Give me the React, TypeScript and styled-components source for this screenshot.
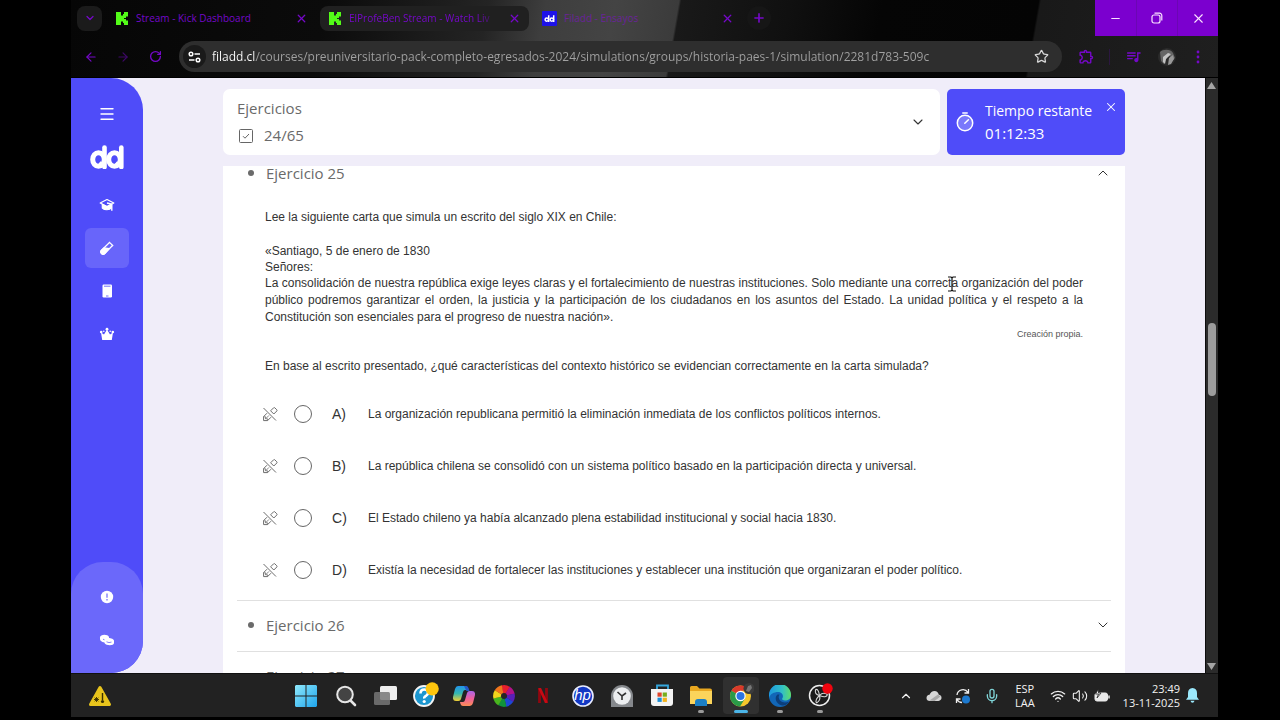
import React from "react";
import styled, { createGlobalStyle, css } from "styled-components";
import {
  ArrowLeft,
  ArrowRight,
  ChevronDown,
  ChevronUp,
  Menu,
  Mic,
  Minus,
  Plus,
  RotateCw,
  Star,
  Volume2,
  Wifi,
  X,
} from "lucide-react";
import { MdQueueMusic, MdOutlineExtension } from "react-icons/md";

const GlobalStyle = createGlobalStyle`
  *, *::before, *::after { box-sizing: border-box; }
  body { margin: 0; background: #000; font-family: "Open Sans", "Noto Sans", sans-serif; }
  button { margin: 0; padding: 0; border: 0; background: none; color: inherit; font: inherit; cursor: pointer; }
  h2, h3, p, ul, fieldset { margin: 0; padding: 0; border: 0; font-weight: 400; list-style: none; }
  svg { display: block; flex: none; }
`;

const indigo = "#4f4cf9";
const violet = "#7508c8";

/* ---------- desktop and browser frame ---------- */

const Desktop = styled.div`
  display: flex;
  flex-direction: column;
  height: 100vh;
  padding: 0 62px 3px 71px;
  background: #000;
  overflow: hidden;
`;

const Chrome = styled.header`
  display: flex;
  flex-direction: column;
  height: 78px;
  flex: none;
  border-bottom: 1px solid #000;
  background: linear-gradient(
    100deg,
    #060606 0%,
    #0b0b0b 22%,
    #242424 36%,
    #3e3e3e 41%,
    #444 47%,
    #3b3b3b 52.4%,
    #191919 52.6%,
    #101010 62%,
    #050505 70%,
    #040404 83.4%,
    #191919 83.6%,
    #1f1f1f 100%
  );
`;

const TabStrip = styled.div`
  display: flex;
  align-items: center;
  height: 36px;
  padding-left: 6px;
  color: ${violet};
`;

const TabSearch = styled.button`
  display: grid;
  place-items: center;
  width: 25px;
  height: 25px;
  margin-right: 5px;
  border-radius: 8px;
  background: #1b1b1b;
`;

const Tab = styled.div<{ $filled?: boolean; $dim?: boolean }>`
  display: flex;
  align-items: center;
  flex: 0 1 209px;
  min-width: 0;
  height: 25px;
  margin-right: 4px;
  padding: 0 8px 0 9px;
  gap: 7px;
  border-radius: 8px;
  background: ${(p) => (p.$filled ? "#202020" : "transparent")};
  color: ${(p) => (p.$dim ? "#6a2399" : violet)};
`;

const TabTitle = styled.span<{ $fade?: boolean }>`
  flex: 1;
  min-width: 0;
  overflow: hidden;
  white-space: nowrap;
  font-size: 10px;
  line-height: 16px;
  ${(p) => p.$fade && css`mask-image: linear-gradient(90deg, #000 85%, transparent);`}
`;

const IconButton = styled.button`
  display: grid;
  place-items: center;
  flex: none;
  color: ${violet};
`;

const TabClose = styled(IconButton)`
  width: 14px;
  height: 14px;
`;

const NewTab = styled(IconButton)`
  width: 24px;
  height: 24px;
  margin-left: 1px;
  border-radius: 12px;
  background: #161616;
`;

const WindowControls = styled.div`
  display: flex;
  align-self: stretch;
  margin-left: auto;
  background: #7b00cf;
`;

const WindowControl = styled.button`
  display: grid;
  place-items: center;
  width: 41px;
  color: #fbe3ff;
  & + & { border-left: 1px solid #6c06b4; }
`;

const Toolbar = styled.div`
  display: flex;
  align-items: center;
  flex: 1;
  padding: 0 18px 0 12px;
`;

const NavGroup = styled.div`
  display: flex;
  gap: 16px;
  margin-right: 16px;
`;

const NavButton = styled(IconButton)<{ $muted?: boolean }>`
  width: 16px;
  height: 16px;
  opacity: ${(p) => (p.$muted ? 0.5 : 1)};
`;

const AddressBar = styled.div`
  display: flex;
  align-items: center;
  flex: 1;
  height: 31px;
  padding: 0 13px 0 4px;
  gap: 6px;
  border-radius: 16px;
  background: #2e2e2e;
  color: #d8d8d8;
`;

const SiteInfo = styled.button`
  display: grid;
  place-items: center;
  width: 23px;
  height: 23px;
  border-radius: 12px;
  background: #1a1a1a;
  color: #fff;
`;

const AddressInput = styled.input`
  flex: 1;
  min-width: 0;
  height: 24px;
  padding: 0;
  border: 0;
  outline: 0;
  font-family: "Open Sans", "Noto Sans", sans-serif;
  font-size: 12px;
  color: transparent;
  background: linear-gradient(90deg, #fff 44px, #a2a2a2 44px);
  background-clip: text;
  -webkit-background-clip: text;
`;

const ExtensionTools = styled.div`
  display: flex;
  align-items: center;
  margin-left: 16px;
  color: #6a10c4;
`;

const ToolDivider = styled.span`
  width: 1px;
  height: 16px;
  margin: 0 15px 0 14px;
  background: #2b1740;
`;

const Avatar = styled.button`
  width: 18px;
  height: 18px;
  margin: 0 20px 0 16px;
  border-radius: 9px;
  overflow: hidden;
`;

/* ---------- page ---------- */

const Viewport = styled.div`
  position: relative;
  display: flex;
  flex: 1;
  min-height: 0;
  background: #f0edf9;
`;

const Sidebar = styled.nav`
  display: flex;
  flex-direction: column;
  align-items: center;
  width: 72px;
  flex: none;
  padding-top: 16px;
  border-radius: 0 32px 32px 0;
  background: ${indigo};
  color: #fff;
  overflow: hidden;
`;

const SideLink = styled.a<{ $active?: boolean }>`
  display: grid;
  place-items: center;
  width: 44px;
  height: 40px;
  margin-bottom: 3px;
  border-radius: 6px;
  color: #fff;
  background: ${(p) => (p.$active ? "#6865fa" : "transparent")};
`;

const SideMenu = styled.button`
  display: grid;
  place-items: center;
  width: 44px;
  height: 40px;
`;

const Brand = styled.a`
  margin: 11px 0 16px;
`;

const SideFooter = styled.div`
  display: flex;
  flex-direction: column;
  align-items: center;
  width: 100%;
  height: 111px;
  margin-top: auto;
  padding-top: 15px;
  border-radius: 32px 32px 0 0;
  background: #6b68fa;
`;

const Main = styled.main`
  display: flex;
  flex-direction: column;
  flex: 1;
  min-width: 0;
  padding: 11px 80px 0;
`;

const TopRow = styled.div`
  display: flex;
  gap: 7px;
  height: 66px;
  margin-bottom: 11px;
  flex: none;
`;

const SummaryCard = styled.section`
  display: flex;
  align-items: center;
  justify-content: space-between;
  flex: 1;
  padding: 0 14px;
  border-radius: 7px;
  background: #fff;
  color: #6a6a6a;
`;

const SummaryTitle = styled.h2`
  font-size: 15px;
  line-height: 27px;
`;

const Progress = styled.p`
  display: flex;
  align-items: center;
  gap: 11px;
  padding-left: 2px;
  font-size: 15px;
  line-height: 27px;
`;

const DarkButton = styled.button`
  display: grid;
  place-items: center;
  width: 16px;
  height: 16px;
  color: #333;
`;

const TimerCard = styled.aside`
  display: flex;
  align-items: center;
  width: 178px;
  padding-left: 9px;
  gap: 11px;
  border-radius: 5px;
  background: ${indigo};
  color: #fff;
`;

const TimerTitle = styled.h2`
  font-size: 14px;
  line-height: 23px;
  white-space: nowrap;
`;

const TimerValue = styled.p`
  font-size: 15px;
  line-height: 23px;
`;

const TimerClose = styled.button`
  align-self: flex-start;
  margin: 11px 7px 0 auto;
`;

const ListPanel = styled.section`
  flex: 1;
  min-height: 0;
  padding: 0 14px;
  background: #fff;
  overflow: hidden;
`;

/* The list is scrolled a little past the top of its first heading. */
const ScrolledList = styled.ul`
  margin-top: -17px;
`;

const Exercise = styled.li`
  border-bottom: 1px solid #e0e0e0;
`;

const ExerciseHeader = styled.h3`
  display: flex;
  align-items: center;
  height: 50px;
  padding: 0 0 2px 11px;
  font-size: 15px;
  line-height: 16px;
  color: #6a6a6a;
  button { margin-left: auto; }
`;

const Bullet = styled.span`
  width: 6px;
  height: 6px;
  margin-right: 12px;
  border-radius: 3px;
  background: #6a6a6a;
`;

const Statement = styled.div`
  padding: 10px 28px 14px;
  font-family: "Liberation Sans", Arial, sans-serif;
  font-size: 12px;
  line-height: 16px;
  color: #333;
`;

const Letter = styled.div`
  padding: 18px 0 16px;
`;

const LetterBody = styled.p`
  line-height: 17px;
  text-align: justify;
`;

const Source = styled.p`
  font-size: 9px;
  text-align: right;
  color: #555;
`;

const Options = styled.fieldset`
  padding: 0 0 4px 25px;
`;

const Option = styled.div`
  display: grid;
  grid-template-columns: 16px 18px 1fr;
  column-gap: 16px;
  align-items: center;
  height: 52px;
  color: #6c6c6c;
`;

const Radio = styled.input`
  appearance: none;
  width: 18px;
  height: 18px;
  margin: 0;
  border: 1px solid #666;
  border-radius: 9px;
  background: #fff;
`;

const OptionLabel = styled.label`
  display: grid;
  grid-template-columns: 32px 1fr;
  column-gap: 4px;
  align-items: center;
  padding-left: 4px;
  font-family: "Liberation Sans", Arial, sans-serif;
  font-size: 12px;
  line-height: 16px;
  color: #333;
`;

const OptionKey = styled.span`
  font-size: 14px;
`;

const ScrollTrack = styled.div`
  display: flex;
  flex-direction: column;
  align-items: center;
  width: 13px;
  flex: none;
  padding: 4px 1px 3px 0;
  border-left: 1px solid #0d0d0d;
  background: #2b2b2b;
`;

const ScrollThumb = styled.span`
  width: 8px;
  height: 73px;
  margin: 234px 0 auto;
  border-radius: 4px;
  background: #9c9c9c;
`;

const TextCursor = styled.svg`
  position: absolute;
  left: 876px;
  top: 198px;
`;

/* ---------- taskbar ---------- */

const Taskbar = styled.footer`
  display: flex;
  align-items: center;
  height: 44px;
  flex: none;
  border-top: 1px solid #111;
  background: #222;
  color: #f2f2f2;
`;

const Widgets = styled.button`
  width: 24px;
  margin: 0 176px 0 17px;
`;

const AppRow = styled.div`
  display: flex;
  justify-content: space-between;
  width: 550px;
  flex: none;
`;

const AppButton = styled.button<{ $open?: boolean; $active?: boolean }>`
  position: relative;
  display: grid;
  place-items: center;
  width: 36px;
  height: 37px;
  border-radius: 4px;
  background: ${(p) => (p.$active ? "#303030" : "transparent")};
  &::after {
    content: "";
    position: absolute;
    bottom: 1px;
    left: 50%;
    translate: -50% 0;
    width: ${(p) => (p.$active ? 14 : 6)}px;
    height: 3px;
    border-radius: 2px;
    background: ${(p) => (p.$active ? "#4cb5e8" : p.$open ? "#9a9a9a" : "transparent")};
  }
`;

const Tray = styled.div`
  display: flex;
  align-items: center;
  margin-left: auto;
  padding-right: 19px;
  gap: 13px;
`;

const TrayCluster = styled.div`
  display: flex;
  align-items: center;
  gap: 6px;
`;

const TrayText = styled.p<{ $align: "center" | "right" }>`
  font-size: 11px;
  line-height: 14px;
  text-align: ${(p) => p.$align};
  padding: ${(p) => (p.$align === "center" ? "0 2px" : "0")};
  white-space: nowrap;
`;

const TrayClock = styled.div`
  display: flex;
  align-items: center;
  gap: 6px;
`;

/* ---------- drawings ---------- */

const KickLogo = () => (
  <svg width="13" height="13" viewBox="0 0 13 13" fill="#53fc18">
    <rect x="0" y="0" width="5" height="13" />
    <rect x="4" y="3.500" width="4" height="6" />
    <rect x="7" y="2" width="3" height="4" />
    <rect x="8" y="0" width="4" height="4.500" />
    <rect x="7" y="7" width="3" height="4" />
    <rect x="8" y="8.500" width="4" height="4.500" />
  </svg>
);

const DdMark = ({ width, height }: { width: number; height: number }) => (
  <svg width={width} height={height} viewBox="0 0 34 24" fill="none" stroke="#fff" strokeWidth="5">
    <ellipse cx="8.500" cy="14.500" rx="5.800" ry="6.800" />
    <path d="M14.500 2.500v19.500" strokeWidth="4.600" strokeLinecap="round" />
    <ellipse cx="24.500" cy="14.500" rx="5.800" ry="6.800" />
    <path d="M31.300 2.500v19.500" strokeWidth="4.600" strokeLinecap="round" />
    <path d="M9.500 17.500l3 2.500M26 17.500l3 2.500" strokeWidth="3.400" />
  </svg>
);

const FiladdFavicon = () => (
  <svg width="15" height="15" viewBox="0 0 15 15">
    <rect width="15" height="15" rx="1" fill="#1d12e8" />
    <g fill="none" stroke="#fff" strokeWidth="1.500">
      <circle cx="4.800" cy="8.600" r="1.700" />
      <circle cx="9.800" cy="8.600" r="1.700" />
      <path d="M6.700 4.200V11M11.700 4.200V11" />
    </g>
  </svg>
);

const RestoreIcon = () => (
  <svg width="12" height="12" viewBox="0 0 12 12" fill="none" stroke="currentColor" strokeWidth="1.200">
    <rect x="1" y="3" width="8" height="8" rx="2" />
    <path d="M3.500 1.200H8.500a2.300 2.300 0 0 1 2.300 2.300V8.500" />
  </svg>
);

const TuneIcon = () => (
  <svg width="13" height="12" viewBox="0 0 13 12" fill="none" stroke="currentColor" strokeWidth="1.500">
    <circle cx="3" cy="3" r="1.800" />
    <path d="M6.500 3H12M1 9h5.500" />
    <circle cx="10" cy="9" r="1.800" />
  </svg>
);

const DotsIcon = () => (
  <svg width="4" height="14" viewBox="0 0 4 14" fill="currentColor">
    <circle cx="2" cy="2" r="1.400" />
    <circle cx="2" cy="7" r="1.400" />
    <circle cx="2" cy="12" r="1.400" />
  </svg>
);

const AvatarPicture = () => (
  <svg width="18" height="18" viewBox="0 0 18 18">
    <rect width="18" height="18" fill="#2b2b2b" />
    <path d="M2 4c3-3 11-3 13 1l2 5-3 3-2-5-3 1-3 7-3-3z" fill="#666" />
    <path d="M5 9l5-4 3 1-5 5-1 5-2-2z" fill="#c4c4c4" />
    <path d="M11 10l4-3 1 4-3 5-3 1z" fill="#999" />
  </svg>
);

const CapIcon = () => (
  <svg width="16" height="16" viewBox="0 0 16 16" fill="none" stroke="#fff" strokeWidth="1.200" strokeLinejoin="round">
    <path d="M1.200 6L8 2.500 14.800 6 8 9.500z" />
    <path d="M3.300 7.400L8 9.800l4.200-2.200v3.600C10.500 13.200 5.500 13.400 3.300 11z" fill="#fff" />
    <path d="M8 6l4.800 1.300v6.500" strokeWidth="1.400" />
  </svg>
);

const TubeIcon = () => (
  <svg width="16" height="16" viewBox="0 0 16 16" fill="none" stroke="#fff" strokeWidth="1.200" strokeLinejoin="round">
    <path d="M10 1.800l4.200 4.200M10.500 2.500L2.500 10.200a2.300 2.300 0 0 0 3.300 3.300L13.500 5.500" />
    <path d="M5.200 7.800l4.800.8L5.800 13.500a2.300 2.300 0 0 1-3.300-3.300z" fill="#fff" />
  </svg>
);

const TabletIcon = () => (
  <svg width="16" height="16" viewBox="0 0 16 16">
    <rect x="3.500" y="1.500" width="9.500" height="13" rx="1.200" fill="#fff" />
    <path d="M5 3.200h6.500M7 13h2.500" stroke={indigo} strokeWidth=".8" />
  </svg>
);

const CrownIcon = () => (
  <svg width="16" height="16" viewBox="0 0 16 16" fill="#fff">
    <path d="M2 6.500l3 2 3-5 3 5 3-2-1.200 7.500H3.200z" />
    <circle cx="8" cy="3.200" r="1.400" />
    <circle cx="2.200" cy="6" r="1.300" />
    <circle cx="13.800" cy="6" r="1.300" />
    <circle cx="4.800" cy="5.200" r=".8" />
    <circle cx="11.200" cy="5.200" r=".8" />
  </svg>
);

const AlertIcon = () => (
  <svg width="16" height="16" viewBox="0 0 16 16">
    <circle cx="8" cy="8" r="6.200" fill="#fff" />
    <path d="M8 4.500v4.200M8 10v1.400" stroke="#6b68fa" strokeWidth="1.200" />
  </svg>
);

const CoinsIcon = () => (
  <svg width="16" height="16" viewBox="0 0 16 16">
    <path d="M1 5.500C1 2 9 2 10 5v4C8 11.500 1 10.500 1 7z" fill="#fff" />
    <path d="M5 8.500C5 5 15 5.500 15 9v2c0 3-8 3-9.500 0z" fill="#fff" />
    <path d="M4 7.200l1.500.6M7.500 9.800l2.500.8 2.500-.5" stroke="#6b68fa" strokeWidth=".8" fill="none" />
  </svg>
);

const CheckBoxIcon = () => (
  <svg width="14" height="14" viewBox="0 0 14 14" fill="none" stroke="#666">
    <rect x=".5" y=".5" width="13" height="13" rx="1" />
    <path d="M4 7.200l2 2 4-4.200" />
  </svg>
);

const StopwatchIcon = () => (
  <svg width="18" height="20" viewBox="0 0 18 20" fill="none" stroke="#fff" strokeWidth="1.500" strokeLinecap="round">
    <circle cx="9" cy="11" r="7.700" fill="#7a78fb" />
    <path d="M6.800 1h4.400M8.800 11.300l3.600-3.600" />
  </svg>
);

const CrossedPencil = () => (
  <svg width="16" height="16" viewBox="0 0 16 16" fill="none" stroke="currentColor" strokeWidth="1" strokeLinejoin="round">
    <path d="M1.500 2l12.500 12.500" />
    <path d="M8.600 4.800l3-3q.6-.5 1.200 0l2 2q.5.600 0 1.200l-3 3z" />
    <path d="M5 7.200L1.600 10.600v4h4L9 11.200" />
    <path d="M1.600 10.800h2v2h2v1.800M3.600 12.800l3.400-3.400" strokeWidth=".8" />
  </svg>
);

const WarningWidget = () => (
  <svg width="24" height="22" viewBox="0 0 24 22">
    <path d="M12 2.500L21.500 19.500h-19z" fill="#e8c41c" stroke="#e8c41c" strokeWidth="3" strokeLinejoin="round" />
    <path d="M14.500 8v7" stroke="#3a3000" strokeWidth="1.400" />
    <circle cx="14.500" cy="16.500" r="1.600" fill="#3a3000" />
    <path d="M6 14.500h5M8.500 12v5M6.700 12.700l3.600 3.600M10.300 12.700l-3.600 3.600" stroke="#3a3000" strokeWidth=".9" />
  </svg>
);

const StartIcon = () => (
  <svg width="22" height="22" viewBox="0 0 22 22">
    <defs>
      <linearGradient id="start" x1="0" y1="0" x2="1" y2="1">
        <stop offset="0" stopColor="#8fe9fb" />
        <stop offset="1" stopColor="#1ea4ec" />
      </linearGradient>
    </defs>
    <path d="M1 0H10.500V10.500H0V1zM11.500 0H21l1 1v9.500H11.500zM0 11.500H10.500V22H1l-1-1zM11.500 11.500H22V21l-1 1h-9.500z" fill="url(#start)" />
  </svg>
);

const SearchIcon = () => (
  <svg width="22" height="22" viewBox="0 0 22 22" fill="#444" stroke="#e6e6e6">
    <path d="M15 15l5 5" strokeWidth="2.600" strokeLinecap="round" />
    <circle cx="10" cy="9.500" r="7.800" strokeWidth="2" />
  </svg>
);

const TaskViewIcon = () => (
  <svg width="23" height="20" viewBox="0 0 23 20">
    <rect x="6" y="0" width="17" height="14" rx="1.500" fill="#eee" />
    <rect x="0" y="6" width="16" height="13" rx="1.500" fill="#777" fillOpacity=".85" />
  </svg>
);

const HelpAppIcon = () => (
  <svg width="28" height="28" viewBox="0 0 28 28">
    <circle cx="13" cy="14" r="10" fill="#1b96cf" stroke="#f4f4f4" strokeWidth="1.800" />
    <path d="M9.500 11.500q0-4 3.800-4t3.700 3.300q0 2-2 3t-1.700 2.700" fill="none" stroke="#fff" strokeWidth="2.600" />
    <circle cx="13.200" cy="19.500" r="1.600" fill="#fff" />
    <circle cx="21.200" cy="6.800" r="6.600" fill="#fdc50e" />
  </svg>
);

const CopilotIcon = () => (
  <svg width="22" height="20" viewBox="0 0 22 20">
    <defs>
      <linearGradient id="cpA" x1="0" y1="0" x2="0" y2="1">
        <stop offset="0" stopColor="#2294ea" />
        <stop offset=".5" stopColor="#35b8b0" />
        <stop offset="1" stopColor="#f2cf33" />
      </linearGradient>
      <linearGradient id="cpB" x1="0" y1="0" x2="0" y2="1">
        <stop offset="0" stopColor="#a965e8" />
        <stop offset=".5" stopColor="#ee5f9c" />
        <stop offset="1" stopColor="#fb8d54" />
      </linearGradient>
    </defs>
    <path d="M5 0h7q2 0 2.500 2l.5 2h-3q-1.500 0-2 2L8 13q-.6 2-2.500 2H3q-3.500 0-3-4L2 3q.8-3 3-3z" fill="url(#cpA)" />
    <path d="M17 20h-7q-2 0-2.500-2L7 16h3q1.500 0 2-2l2-7q.6-2 2.500-2H19q3.500 0 3 4l-2 8q-.8 3-3 3z" fill="url(#cpB)" />
    <path d="M11 0h2q2 0 2.500 2l1 3h-3z" fill="#2457c9" />
  </svg>
);

const ColorWheel = () => {
  const colors = ["#e8202c", "#b3128a", "#5a1fb8", "#1f46d6", "#10923c", "#49b51e", "#f1d51c", "#f1761c"];
  return (
    <svg width="22" height="22" viewBox="-11 -11 22 22">
      {colors.map((c, i) => (
        <path key={c} d="M0 0L-4.300-10A10.800 10.800 0 0 1 4.300-10z" fill={c} transform={`rotate(${i * 45 + 10})`} />
      ))}
      <circle r="3" fill="#252525" />
    </svg>
  );
};

const RibbonIcon = () => (
  <svg width="10" height="15" viewBox="0 0 10 15" fill="none" strokeWidth="2.800">
    <path d="M1.500 0v15M8.500 0v15" stroke="#8f0710" />
    <path d="M1.500 0l7 15" stroke="#c90a14" />
  </svg>
);

const HpIcon = () => (
  <svg width="22" height="22" viewBox="0 0 22 22">
    <circle cx="11" cy="11" r="10" fill="#1238c4" stroke="#e8ecff" strokeWidth="1.600" />
    <text x="10.500" y="15" textAnchor="middle" fontFamily="Liberation Sans, sans-serif" fontStyle="italic" fontSize="15" fill="#fff">
      hp
    </text>
  </svg>
);

const ClockIcon = () => (
  <svg width="22" height="22" viewBox="0 0 22 22">
    <path d="M0 11A11 11 0 0 1 22 11v11H0z" fill="#85888c" />
    <circle cx="11" cy="11" r="8.800" fill="#eceef0" />
    <path d="M6.500 7l4.500 4 4-3M11 11v4" stroke="#333" strokeWidth="1.600" fill="none" />
  </svg>
);

const StoreIcon = () => (
  <svg width="22" height="23" viewBox="0 0 22 23">
    <path d="M6 6V1.500h11V6" fill="none" stroke="#35a7dd" strokeWidth="1.800" />
    <path d="M0 5h22v14q0 3-3 3H3q-3 0-3-3z" fill="#f3f3f3" />
    <rect x="6.500" y="8.500" width="4.200" height="4.200" fill="#e0442a" />
    <rect x="11.700" y="8.500" width="4.200" height="4.200" fill="#77ae1c" />
    <rect x="6.500" y="13.700" width="4.200" height="4.200" fill="#1b8fd8" />
    <rect x="11.700" y="13.700" width="4.200" height="4.200" fill="#f4b31a" />
  </svg>
);

const FolderIcon = () => (
  <svg width="22" height="20" viewBox="0 0 22 20">
    <path d="M0 1.500Q0 0 1.500 0H7l2.500 2.500H20q2 0 2 2V17q0 1-1 1H0z" fill="#e9a820" />
    <path d="M0 5h22v13H0z" fill="#fbd45b" />
    <path d="M5 20v-4q0-3 3-3h6q3 0 3 3v4z" fill="#1b7fc4" />
  </svg>
);

const ChromeIcon = () => (
  <svg width="26" height="26" viewBox="0 0 26 26">
    <circle cx="12.500" cy="13" r="10.500" fill="#f6c72c" />
    <path d="M12.500 13L3.400 7.800A10.500 10.500 0 0 1 21.600 7.800H12.500z" fill="#d93a2b" />
    <path d="M12.500 13L3.400 7.800A10.500 10.500 0 0 0 12 23.500L17 15.500z" fill="#2a9a48" />
    <circle cx="12.500" cy="13" r="5.200" fill="#fff" />
    <circle cx="12.500" cy="13" r="4" fill="#2b74e2" />
    <circle cx="21" cy="5.500" r="5.500" fill="#3b3b3b" />
    <path d="M18 8l2-5 3-1 1 3-3 4z" fill="#777" />
  </svg>
);

const EdgeIcon = () => (
  <svg width="22" height="22" viewBox="0 0 22 22">
    <defs>
      <linearGradient id="edge" x1="0" y1=".3" x2="1" y2=".3">
        <stop offset="0" stopColor="#1d97df" />
        <stop offset=".6" stopColor="#31c0c6" />
        <stop offset="1" stopColor="#5fdc6b" />
      </linearGradient>
    </defs>
    <circle cx="11" cy="11" r="11" fill="#1267b8" />
    <path d="M0 10A11 11 0 0 1 22 10c0 4-3 5.500-6 5.500-2.500 0-3.500-1-2.500-2.500C15 10 12.500 7 9 7 5 7 1 9 0 13z" fill="url(#edge)" />
    <path d="M8.500 9.500C5 12 6.500 19 13 20.500c3.500.5 6-2 7-4-3 1.500-7 1.200-9-1-1.500-1.800-1.800-4-.5-6z" fill="#0c3f7c" />
  </svg>
);

const ObsIcon = () => (
  <svg width="26" height="26" viewBox="0 0 26 26">
    <circle cx="12.500" cy="12.500" r="10" fill="#1b1b1b" stroke="#eee" strokeWidth="1.500" />
    <path d="M12.500 12.500q-5-1-4-6M12.500 12.500q3.500-4 8-1M12.500 12.500q1.500 5-3 7.500M8.500 6.500q3-1 4 6M20.500 11.500q-1 4-8 1M9.500 20q-2-3 3-7.500" fill="none" stroke="#d5d5d5" strokeWidth="1.100" />
    <circle cx="20.500" cy="5.500" r="5.200" fill="#f0050f" />
  </svg>
);

const CloudIcon = () => (
  <svg width="16" height="12" viewBox="0 0 16 12">
    <path d="M4 11q-3.500 0-3.500-3t3-3.200Q5 1 8.500 1t4.300 3.800q2.700.4 2.700 3T12.500 11z" fill="#d6d6d6" />
    <path d="M3.500 10.500L12 4.500l2.500 2-6 4.500z" fill="#a7a7a7" />
  </svg>
);

const SyncIcon = () => (
  <svg width="16" height="16" viewBox="0 0 16 16" fill="none" stroke="#eee" strokeWidth="1.300">
    <path d="M2 7A6 6 0 0 1 13 4.500M13.500 1v4H9.500M1.500 15v-4h4M2 11.500q1.500 3 5 3" />
    <circle cx="11" cy="11.500" r="4" fill="#1c79cf" stroke="none" />
  </svg>
);

const BatteryIcon = () => (
  <svg width="16" height="13" viewBox="0 0 16 13">
    <rect x="1" y="4" width="12.500" height="8" rx="2" fill="#e9e9e9" stroke="#e9e9e9" />
    <path d="M15 6.500v3" stroke="#e9e9e9" strokeWidth="1.500" />
    <path d="M4.500 0L1.500 5h3L3 9l4-5H4.500z" fill="#f2f2f2" stroke="#222" strokeWidth=".8" />
  </svg>
);

const BellIcon = () => (
  <svg width="13" height="15" viewBox="0 0 13 15" fill="#9be8fb">
    <path d="M6.500 0Q11 .5 11 5v4l2 2.800H0L2 9V5Q2 .5 6.500 0zM4.500 12.800h4q-.4 2-2 2t-2-2z" />
  </svg>
);

const Triangle = ({ down }: { down?: boolean }) => (
  <svg width="9" height="7" viewBox="0 0 9 7" fill="#a5a5a5">
    <path d={down ? "M0 0h9L4.500 7z" : "M0 7h9L4.500 0z"} />
  </svg>
);

/* ---------- content ---------- */

const options = [
  { id: "A", text: "La organización republicana permitió la eliminación inmediata de los conflictos políticos internos." },
  { id: "B", text: "La república chilena se consolidó con un sistema político basado en la participación directa y universal." },
  { id: "C", text: "El Estado chileno ya había alcanzado plena estabilidad institucional y social hacia 1830." },
  { id: "D", text: "Existía la necesidad de fortalecer las instituciones y establecer una institución que organizaran el poder político." },
];

const apps = [
  { name: "Inicio", icon: <StartIcon /> },
  { name: "Buscar", icon: <SearchIcon /> },
  { name: "Vista de tareas", icon: <TaskViewIcon /> },
  { name: "Ayuda", icon: <HelpAppIcon /> },
  { name: "Copilot", icon: <CopilotIcon /> },
  { name: "Color", icon: <ColorWheel /> },
  { name: "Netflix", icon: <RibbonIcon /> },
  { name: "HP", icon: <HpIcon /> },
  { name: "Reloj", icon: <ClockIcon /> },
  { name: "Store", icon: <StoreIcon /> },
  { name: "Explorador", icon: <FolderIcon />, open: true },
  { name: "Chrome", icon: <ChromeIcon />, active: true },
  { name: "Edge", icon: <EdgeIcon />, open: true },
  { name: "OBS", icon: <ObsIcon />, open: true },
];

const BrowserChrome = () => (
  <Chrome>
    <TabStrip>
      <TabSearch aria-label="Buscar pestañas"><ChevronDown size={12} strokeWidth={2.5} /></TabSearch>
      <Tab>
        <KickLogo />
        <TabTitle>Stream - Kick Dashboard</TabTitle>
        <TabClose aria-label="Cerrar pestaña"><X size={13} strokeWidth={2.4} /></TabClose>
      </Tab>
      <Tab $filled>
        <KickLogo />
        <TabTitle $fade>ElProfeBen Stream - Watch Liv</TabTitle>
        <TabClose aria-label="Cerrar pestaña"><X size={13} strokeWidth={2.4} /></TabClose>
      </Tab>
      <Tab $dim>
        <FiladdFavicon />
        <TabTitle>Filadd - Ensayos</TabTitle>
        <TabClose aria-label="Cerrar pestaña"><X size={13} strokeWidth={2.4} /></TabClose>
      </Tab>
      <NewTab aria-label="Nueva pestaña"><Plus size={14} strokeWidth={2.8} /></NewTab>
      <WindowControls>
        <WindowControl aria-label="Minimizar"><Minus size={13} /></WindowControl>
        <WindowControl aria-label="Restaurar"><RestoreIcon /></WindowControl>
        <WindowControl aria-label="Cerrar"><X size={15} strokeWidth={1.8} /></WindowControl>
      </WindowControls>
    </TabStrip>
    <Toolbar>
      <NavGroup>
        <NavButton aria-label="Atrás"><ArrowLeft size={14} /></NavButton>
        <NavButton aria-label="Adelante" $muted><ArrowRight size={14} /></NavButton>
        <NavButton aria-label="Recargar"><RotateCw size={13} strokeWidth={2.4} /></NavButton>
      </NavGroup>
      <AddressBar>
        <SiteInfo aria-label="Información del sitio"><TuneIcon /></SiteInfo>
        <AddressInput
          aria-label="Dirección"
          defaultValue="filadd.cl/courses/preuniversitario-pack-completo-egresados-2024/simulations/groups/historia-paes-1/simulation/2281d783-509c"
        />
        <Star size={15} strokeWidth={2} />
      </AddressBar>
      <ExtensionTools>
        <IconButton aria-label="Extensiones"><MdOutlineExtension size={17} /></IconButton>
        <ToolDivider />
        <IconButton aria-label="Control multimedia"><MdQueueMusic size={17} /></IconButton>
        <Avatar aria-label="Perfil"><AvatarPicture /></Avatar>
        <IconButton aria-label="Menú"><DotsIcon /></IconButton>
      </ExtensionTools>
    </Toolbar>
  </Chrome>
);

const SideNav = () => (
  <Sidebar aria-label="Principal">
    <SideMenu aria-label="Abrir menú"><Menu size={18} strokeWidth={1.8} /></SideMenu>
    <Brand href="#inicio" aria-label="Filadd"><DdMark width={34} height={24} /></Brand>
    <SideLink href="#cursos" aria-label="Cursos"><CapIcon /></SideLink>
    <SideLink href="#ensayos" aria-label="Ensayos" $active><TubeIcon /></SideLink>
    <SideLink href="#material" aria-label="Material"><TabletIcon /></SideLink>
    <SideLink href="#premium" aria-label="Premium"><CrownIcon /></SideLink>
    <SideFooter>
      <SideLink href="#avisos" aria-label="Avisos"><AlertIcon /></SideLink>
      <SideLink href="#monedas" aria-label="Monedas"><CoinsIcon /></SideLink>
    </SideFooter>
  </Sidebar>
);

const ExerciseHeading = ({ n, open }: { n: number; open?: boolean }) => (
  <ExerciseHeader>
    <Bullet />
    {`Ejercicio ${n}`}
    <DarkButton aria-label={open ? "Contraer" : "Expandir"} aria-expanded={!!open}>
      {open ? <ChevronUp size={16} strokeWidth={1.5} /> : <ChevronDown size={16} strokeWidth={1.5} />}
    </DarkButton>
  </ExerciseHeader>
);

export default function App() {
  return (
    <Desktop>
      <GlobalStyle />
      <BrowserChrome />
      <Viewport>
        <SideNav />
        <Main>
          <TopRow>
            <SummaryCard>
              <div>
                <SummaryTitle>Ejercicios</SummaryTitle>
                <Progress><CheckBoxIcon />24/65</Progress>
              </div>
              <DarkButton aria-label="Ver ejercicios"><ChevronDown size={16} strokeWidth={1.6} /></DarkButton>
            </SummaryCard>
            <TimerCard>
              <StopwatchIcon />
              <div>
                <TimerTitle>Tiempo restante</TimerTitle>
                <TimerValue>01:12:33</TimerValue>
              </div>
              <TimerClose aria-label="Cerrar temporizador"><X size={14} strokeWidth={1.8} /></TimerClose>
            </TimerCard>
          </TopRow>
          <ListPanel>
            <ScrolledList>
              <Exercise>
                <ExerciseHeading n={25} open />
                <Statement>
                  <p>Lee la siguiente carta que simula un escrito del siglo XIX en Chile:</p>
                  <Letter>
                    <p>«Santiago, 5 de enero de 1830</p>
                    <p>Señores:</p>
                    <LetterBody>
                      La consolidación de nuestra república exige leyes claras y el fortalecimiento de nuestras
                      instituciones. Solo mediante una correcta organización del poder público podremos garantizar
                      el orden, la justicia y la participación de los ciudadanos en los asuntos del Estado. La unidad
                      política y el respeto a la Constitución son esenciales para el progreso de nuestra nación».
                    </LetterBody>
                    <Source>Creación propia.</Source>
                  </Letter>
                  <p>
                    En base al escrito presentado, ¿qué características del contexto histórico se evidencian
                    correctamente en la carta simulada?
                  </p>
                </Statement>
                <Options aria-label="Alternativas">
                  {options.map((o) => (
                    <Option key={o.id}>
                      <button aria-label={`Descartar ${o.id}`}><CrossedPencil /></button>
                      <Radio type="radio" name="respuesta" id={`op-${o.id}`} />
                      <OptionLabel htmlFor={`op-${o.id}`}>
                        <OptionKey>{o.id})</OptionKey>
                        <span>{o.text}</span>
                      </OptionLabel>
                    </Option>
                  ))}
                </Options>
              </Exercise>
              <Exercise><ExerciseHeading n={26} /></Exercise>
              <Exercise><ExerciseHeading n={27} /></Exercise>
            </ScrolledList>
          </ListPanel>
        </Main>
        <ScrollTrack>
          <Triangle />
          <ScrollThumb />
          <Triangle down />
        </ScrollTrack>
        <TextCursor width="10" height="16" viewBox="0 0 10 16" fill="none" stroke="#111" strokeWidth="1.200">
          <path d="M1 1h3l1 1 1-1h3M5 2v12M1 15h3l1-1 1 1h3" />
        </TextCursor>
      </Viewport>
      <Taskbar>
        <Widgets aria-label="Widgets"><WarningWidget /></Widgets>
        <AppRow>
          {apps.map((a) => (
            <AppButton key={a.name} aria-label={a.name} $open={a.open} $active={a.active}>{a.icon}</AppButton>
          ))}
        </AppRow>
        <Tray>
          <ChevronUp size={14} />
          <CloudIcon />
          <SyncIcon />
          <Mic size={16} color="#7fd3d6" />
          <TrayText $align="center">ESP<br />LAA</TrayText>
          <TrayCluster>
            <Wifi size={16} />
            <Volume2 size={16} strokeWidth={1.6} />
            <BatteryIcon />
          </TrayCluster>
          <TrayClock>
            <TrayText $align="right">23:49<br />13-11-2025</TrayText>
            <BellIcon />
          </TrayClock>
        </Tray>
      </Taskbar>
    </Desktop>
  );
}
